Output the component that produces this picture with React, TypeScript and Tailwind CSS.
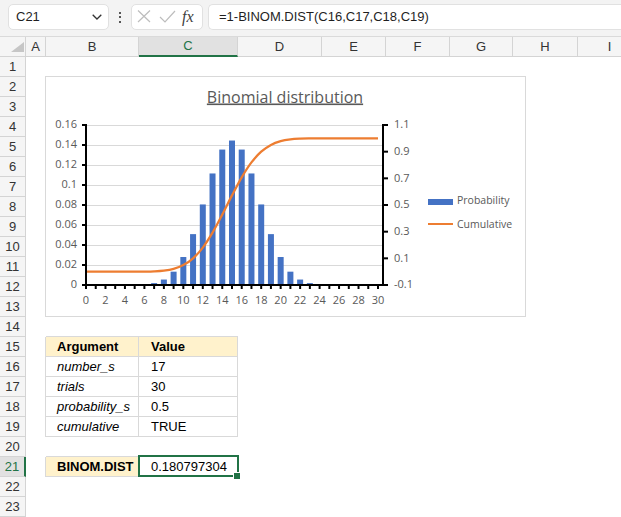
import React from "react";

function choose(n: number, k: number) {
  let r = 1;
  for (let i = 1; i <= k; i++) r = (r * (n - k + i)) / i;
  return r;
}

const PMF = Array.from({ length: 31 }, (_, k) => choose(30, k) / 2 ** 30);
const CDF = PMF.reduce<number[]>((acc, p) => {
  acc.push((acc[acc.length - 1] ?? 0) + p);
  return acc;
}, []);

// plot geometry inside the chart svg
const X0 = 40;
const STEP = 9.733;
const YB = 208;
const YT = 48;
const cx = (i: number) => X0 + i * STEP;
const yL = (v: number) => YB - (v / 0.16) * (YB - YT);
const yR = (v: number) => YB - ((v + 0.1) / 1.2) * (YB - YT);

function smoothPath(pts: [number, number][]) {
  let d = `M${pts[0][0]},${pts[0][1]}`;
  for (let i = 0; i < pts.length - 1; i++) {
    const p0 = pts[i - 1] ?? pts[i];
    const p1 = pts[i];
    const p2 = pts[i + 1];
    const p3 = pts[i + 2] ?? p2;
    const c1x = p1[0] + (p2[0] - p0[0]) / 6;
    const c1y = p1[1] + (p2[1] - p0[1]) / 6;
    const c2x = p2[0] - (p3[0] - p1[0]) / 6;
    const c2y = p2[1] - (p3[1] - p1[1]) / 6;
    d += ` C${c1x},${c1y} ${c2x},${c2y} ${p2[0]},${p2[1]}`;
  }
  return d;
}

const LEFT_TICKS = ["0", "0.02", "0.04", "0.06", "0.08", "0.1", "0.12", "0.14", "0.16"];
const RIGHT_TICKS = ["-0.1", "0.1", "0.3", "0.5", "0.7", "0.9", "1.1"];

function Chart() {
  const line = smoothPath(CDF.map((v, i) => [cx(i), yR(v)] as [number, number]));
  return (
    <div className="absolute left-[45px] top-[76px] h-[241px] w-[481px] border border-[#d9d9d9] bg-white">
      <svg width="479" height="239" className="block font-['Open_Sans',sans-serif]">
        <text x="239" y="25.5" textAnchor="middle" fontSize="16" fill="#595959" className="underline">
          Binomial distribution
        </text>

        {LEFT_TICKS.slice(1).map((_, i) => {
          const y = yL((i + 1) * 0.02) + 0.5;
          return <line key={i} x1={41} x2={337} y1={y} y2={y} stroke="#d9d9d9" strokeWidth="1" />;
        })}

        {PMF.map((p, i) => (
          <rect key={i} x={cx(i) - 3} y={yL(p)} width="6" height={YB - yL(p)} fill="#4472C4" />
        ))}

        <path d={line} fill="none" stroke="#ED7D31" strokeWidth="2.25" strokeLinejoin="round" />

        {/* axes */}
        <line x1={40} x2={40} y1={47} y2={209} stroke="#000" strokeWidth="2" />
        <line x1={337} x2={337} y1={47} y2={209} stroke="#000" strokeWidth="2" />
        <line x1={39} x2={338} y1={208} y2={208} stroke="#000" strokeWidth="2" />

        {LEFT_TICKS.map((t, i) => {
          const y = yL(i * 0.02);
          return (
            <g key={t}>
              <line x1={36} x2={40} y1={y} y2={y} stroke="#000" strokeWidth="2" />
              <text x="31" y={y + 3.3} textAnchor="end" fontSize="11" fill="#595959">
                {t}
              </text>
            </g>
          );
        })}

        {RIGHT_TICKS.map((t, i) => {
          const y = yR(-0.1 + i * 0.2);
          return (
            <g key={t}>
              <line x1={337} x2={342} y1={y} y2={y} stroke="#000" strokeWidth="2" />
              <text x="348" y={y + 3.3} fontSize="11" fill="#595959">
                {t}
              </text>
            </g>
          );
        })}

        {PMF.map((_, i) => (
          <line key={i} x1={cx(i)} x2={cx(i)} y1={208} y2={212} stroke="#000" strokeWidth="2" />
        ))}
        {PMF.map((_, i) =>
          i % 2 === 0 ? (
            <text key={i} x={cx(i)} y="226.5" textAnchor="middle" fontSize="11" fill="#595959">
              {i}
            </text>
          ) : null
        )}

        {/* legend */}
        <rect x="382" y="122" width="25" height="6" fill="#4472C4" />
        <text x="411" y="127.3" fontSize="10.5" fill="#595959">
          Probability
        </text>
        <line x1="382" x2="407" y1="147" y2="147" stroke="#ED7D31" strokeWidth="2" />
        <text x="411" y="151.3" fontSize="10.5" fill="#595959">
          Cumulative
        </text>
      </svg>
    </div>
  );
}

function FormulaBar() {
  return (
    <div className="flex h-[36px] items-start bg-[#f3f3f3] pl-[8px] pt-[4px]">
      <div className="flex h-[26px] w-[101px] shrink-0 items-center justify-between rounded-[5px] border border-[#e1e1e1] bg-white pl-[7px] pr-[6px] text-[13px] text-[#1f1f1f]">
        <span>C21</span>
        <svg width="10" height="6" viewBox="0 0 10 6">
          <path d="M0.7 0.7 L5 5 L9.3 0.7" stroke="#333" strokeWidth="1.3" fill="none" />
        </svg>
      </div>
      <div className="flex h-[26px] w-[22px] shrink-0 flex-col items-center justify-center gap-[2.5px]">
        <span className="h-[2px] w-[2px] bg-[#555]" />
        <span className="h-[2px] w-[2px] bg-[#555]" />
        <span className="h-[2px] w-[2px] bg-[#555]" />
      </div>
      <div className="flex h-[26px] w-[72px] shrink-0 items-center rounded-[5px] border border-[#e1e1e1] bg-white">
        <svg width="72" height="24" viewBox="0 0 72 24" className="block">
          <path d="M6 3.5 L18 15 M18 3.5 L6 15" stroke="#bdbdbd" strokeWidth="1.2" fill="none" transform="translate(0 2)" />
          <path d="M28 12 L33 17 L43 6" stroke="#bdbdbd" strokeWidth="1.2" fill="none" />
        </svg>
        <span className="-ml-[22px] font-['Liberation_Serif',serif] text-[16px] italic leading-none text-[#404040]">
          fx
        </span>
      </div>
      <div className="ml-[5px] flex h-[26px] flex-1 items-center rounded-l-[5px] border border-r-0 border-[#e1e1e1] bg-white pl-[10px] text-[13px] text-[#1f1f1f]">
        =1-BINOM.DIST(C16,C17,C18,C19)
      </div>
    </div>
  );
}

const COLS: { id: string; w: string }[] = [
  { id: "A", w: "w-[20px]" },
  { id: "B", w: "w-[93px]" },
  { id: "C", w: "w-[99px]" },
  { id: "D", w: "w-[84px]" },
  { id: "E", w: "w-[64px]" },
  { id: "F", w: "w-[64px]" },
  { id: "G", w: "w-[63px]" },
  { id: "H", w: "w-[65px]" },
  { id: "I", w: "w-[64px]" },
];

function ColumnHeaders() {
  return (
    <div className="flex h-[21px] border-t border-[#dadada]">
      <div className="flex h-full w-[26px] shrink-0 items-end justify-end border-b border-r border-[#d4d4d4] bg-[#f5f5f5] pb-[4px] pr-[1px]">
        <svg width="13" height="10" viewBox="0 0 13 10">
          <path d="M13 0 L13 10 L0 10 Z" fill="#c6c6c6" />
        </svg>
      </div>
      {COLS.map((c) =>
        c.id === "C" ? (
          <div
            key={c.id}
            className={`${c.w} flex h-full shrink-0 items-center justify-center border-b-2 border-r border-b-[#217346] border-r-[#d4d4d4] bg-[#e1e1e1] text-[13px] text-[#217346]`}
          >
            {c.id}
          </div>
        ) : (
          <div
            key={c.id}
            className={`${c.w} flex h-full shrink-0 items-center justify-center border-b border-r border-[#d4d4d4] bg-[#f5f5f5] text-[13px] text-[#333]`}
          >
            {c.id}
          </div>
        )
      )}
    </div>
  );
}

const TABLE: Record<number, { b: string; c: string; head?: boolean }> = {
  15: { b: "Argument", c: "Value", head: true },
  16: { b: "number_s", c: "17" },
  17: { b: "trials", c: "30" },
  18: { b: "probability_s", c: "0.5" },
  19: { b: "cumulative", c: "TRUE" },
};

function Row({ n }: { n: number }) {
  const t = TABLE[n];
  const edgeA = t || n === 21;
  const topEdge = n === 14 || n === 20;

  return (
    <div className="flex h-[20px]">
      {n === 21 ? (
        <div className="flex h-full w-[26px] shrink-0 items-center justify-center border-b border-r-2 border-b-[#d4d4d4] border-r-[#217346] bg-[#e1e1e1] text-[13px] text-[#217346]">
          {n}
        </div>
      ) : (
        <div className="flex h-full w-[26px] shrink-0 items-center justify-center border-b border-r border-[#d4d4d4] bg-[#f5f5f5] text-[13px] text-[#333]">
          {n}
        </div>
      )}
      <div className={`h-full w-[20px] shrink-0 ${edgeA ? "border-r border-[#d9d9d9]" : ""}`} />

      {t ? (
        <>
          <div
            className={`flex h-full w-[93px] shrink-0 items-center border-b border-r border-[#d9d9d9] pl-[11px] text-[13px] text-black ${
              t.head ? "bg-[#fff2cc] font-bold" : "italic"
            }`}
          >
            {t.b}
          </div>
          <div
            className={`flex h-full w-[99px] shrink-0 items-center border-b border-r border-[#d9d9d9] pl-[12px] text-[13px] text-black ${
              t.head ? "bg-[#fff2cc] font-bold" : ""
            }`}
          >
            {t.c}
          </div>
        </>
      ) : n === 21 ? (
        <>
          <div className="flex h-full w-[93px] shrink-0 items-center border-b border-r border-[#d9d9d9] bg-[#fff2cc] pl-[11px] text-[13px] font-bold text-black">
            BINOM.DIST
          </div>
          <div className="relative flex h-full w-[99px] shrink-0 items-center pl-[12px] text-[13px] text-black">
            0.180797304
            <div className="absolute -left-[1px] -top-[2px] h-[22px] w-[101px] border-2 border-[#217346]" />
            <div className="absolute -bottom-[2px] -right-[2px] h-[6px] w-[6px] bg-[#217346] outline outline-1 outline-white" />
          </div>
        </>
      ) : (
        <>
          <div className={`h-full w-[93px] shrink-0 ${topEdge ? "border-b border-[#d9d9d9]" : ""}`} />
          <div className={`h-full w-[99px] shrink-0 ${n === 14 ? "border-b border-[#d9d9d9]" : ""}`} />
        </>
      )}
      <div className="h-full flex-1" />
    </div>
  );
}

export default function App() {
  const rows = Array.from({ length: 23 }, (_, i) => i + 1);
  return (
    <div className="relative h-[517px] w-[621px] overflow-hidden bg-white font-['Liberation_Sans',Arial,sans-serif]">
      <FormulaBar />
      <div className="w-[642px]">
        <ColumnHeaders />
        {rows.map((n) => (
          <Row key={n} n={n} />
        ))}
      </div>
      <Chart />
    </div>
  );
}
